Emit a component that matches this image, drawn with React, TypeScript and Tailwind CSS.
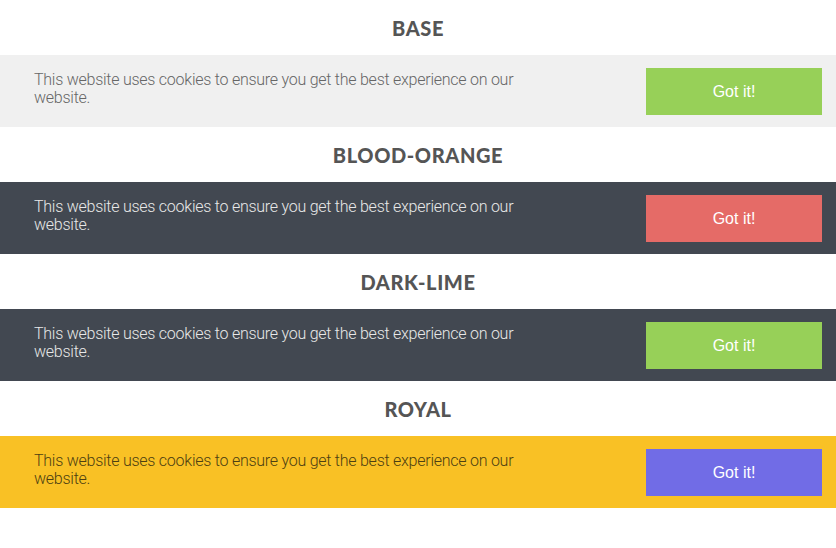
import React from 'react';

type Theme = {
  name: string;
  bg: string;
  text: string;
  btn: string;
};

const THEMES: Theme[] = [
  { name: 'BASE', bg: 'bg-[#f0f0f0]', text: 'text-[#666666]', btn: 'bg-[#97d058]' },
  { name: 'BLOOD-ORANGE', bg: 'bg-[#424851]', text: 'text-[#e8e8e8]', btn: 'bg-[#e56b67]' },
  { name: 'DARK-LIME', bg: 'bg-[#424851]', text: 'text-[#e8e8e8]', btn: 'bg-[#97d058]' },
  { name: 'ROYAL', bg: 'bg-[#f9c125]', text: 'text-[#4d3f12]', btn: 'bg-[#716ce6]' },
];

const CookieBar: React.FC<{ theme: Theme }> = ({ theme }) => (
  <section>
    <h2 className="h-[55px] flex items-center justify-center text-[20px] font-black tracking-[0.6px] text-[#555555] font-['Lato',sans-serif]">
      {theme.name}
    </h2>
    <div className={`h-[72px] flex items-start justify-between pl-[34px] pr-[14px] pt-[13px] ${theme.bg}`}>
      <p className={`w-[500px] mt-[3px] text-[16px] leading-[18px] font-light tracking-[-0.25px] font-['Roboto',sans-serif] ${theme.text}`}>
        This website uses cookies to ensure you get the best experience on our website.
      </p>
      <button className={`w-[176px] h-[47px] text-white text-[16px] font-['Liberation_Sans',sans-serif] ${theme.btn}`}>
        Got it!
      </button>
    </div>
  </section>
);

export default function App() {
  return (
    <div className="w-[836px] h-[548px] bg-white">
      {THEMES.map((t) => (
        <CookieBar key={t.name} theme={t} />
      ))}
    </div>
  );
}
